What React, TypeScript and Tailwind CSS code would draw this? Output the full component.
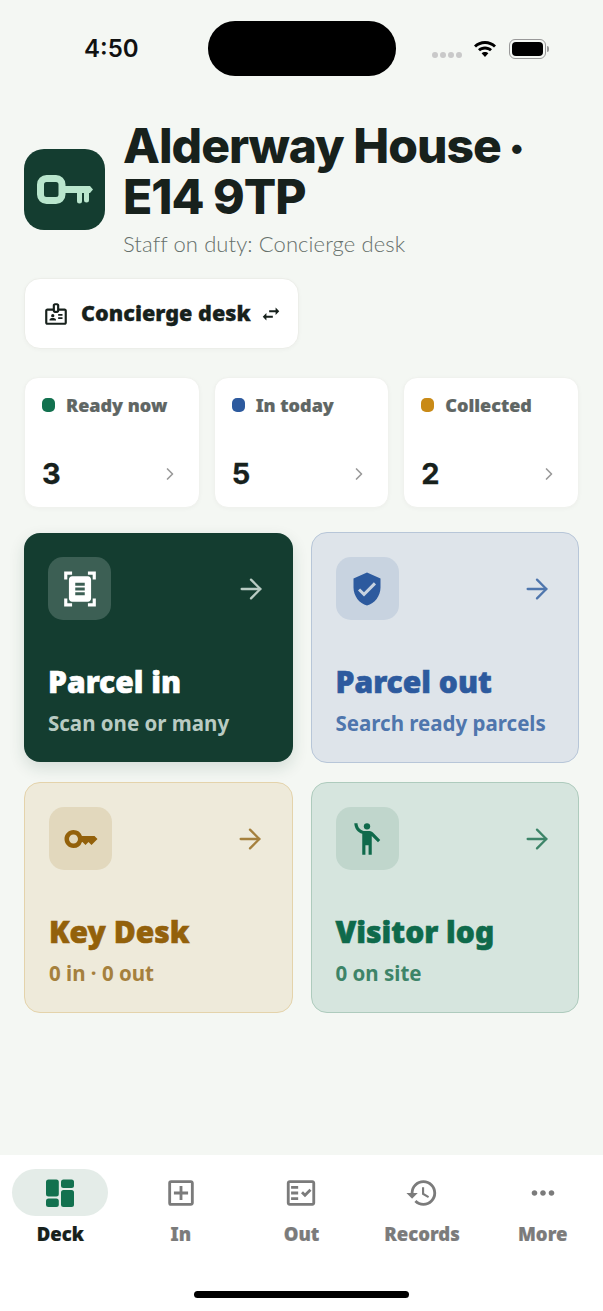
import { ArrowRight, ChevronRight } from "lucide-react";
import {
  MdDocumentScanner,
  MdEmojiPeople,
  MdHistory,
  MdKey,
  MdMoreHoriz,
  MdOutlineAddBox,
  MdOutlineBadge,
  MdOutlineFactCheck,
  MdSwapHoriz,
  MdVerifiedUser,
} from "react-icons/md";

const stats = [
  { label: "Ready now", value: "3", dot: "bg-[#12714f]" },
  { label: "In today", value: "5", dot: "bg-[#2d5a9e]" },
  { label: "Collected", value: "2", dot: "bg-[#c98a17]" },
];

const DeckIcon = ({ size, className }: { size: number; className?: string }) => (
  <svg width={size} height={size} viewBox="0 0 34 34" fill="currentColor" className={className}>
    <rect x="3" y="3.500" width="12.800" height="17" rx="2.500" />
    <rect x="3" y="22.500" width="12.800" height="8.500" rx="2.500" />
    <rect x="18" y="3.500" width="13" height="8.500" rx="2.500" />
    <rect x="18" y="14" width="13" height="17" rx="2.500" />
  </svg>
);

const tabs = [
  { label: "Deck", Icon: DeckIcon, active: true },
  { label: "In", Icon: MdOutlineAddBox, active: false },
  { label: "Out", Icon: MdOutlineFactCheck, active: false },
  { label: "Records", Icon: MdHistory, active: false },
  { label: "More", Icon: MdMoreHoriz, active: false },
];

const HouseKey = () => (
  <svg width="56" height="30" viewBox="0 0 56 30" fill="none">
    <rect x="3.500" y="3.500" width="21.500" height="22" rx="6" stroke="#b9e6cd" strokeWidth="7" />
    <path d="M28 11h25l3 3.500-3 3.500h-1v7a2.500 2.500 0 0 1-5 0v-7h-2v8a2.500 2.500 0 0 1-5 0v-8H28z" fill="#b9e6cd" />
  </svg>
);

const StatusBar = () => (
  <div className="relative h-[120px] shrink-0">
    <span className="absolute left-[84px] top-[33px] text-[24px] leading-[32px] font-semibold text-[#111] font-['Inter',sans-serif]">
      4:50
    </span>
    <div className="absolute left-[208px] top-[21px] h-[55px] w-[188px] rounded-[27px] bg-black" />
    <div className="absolute left-[432px] top-[52px] flex gap-[2px]">
      <span className="h-[6px] w-[6px] rounded-full bg-[#c9c9c9]" />
      <span className="h-[6px] w-[6px] rounded-full bg-[#c9c9c9]" />
      <span className="h-[6px] w-[6px] rounded-full bg-[#c9c9c9]" />
      <span className="h-[6px] w-[6px] rounded-full bg-[#c9c9c9]" />
    </div>
    <svg className="absolute left-[473px] top-[37px]" width="24" height="22" viewBox="0 0 24 20" fill="#000">
      <path d="M12 3C7.700 3 3.900 4.700 1 7.400l2 2.100C5.400 7.300 8.500 6 12 6s6.600 1.300 9 3.500l2-2.100C20.100 4.700 16.300 3 12 3z" />
      <path d="M12 8.500c-2.700 0-5.100 1-7 2.700l2 2.100c1.300-1.200 3.100-1.900 5-1.900s3.700.700 5 1.900l2-2.100c-1.900-1.700-4.300-2.700-7-2.700z" />
      <path d="M12 14c-1.300 0-2.500.500-3.400 1.300L12 19l3.400-3.700C14.500 14.500 13.300 14 12 14z" />
    </svg>
    <div className="absolute left-[509px] top-[39px] flex h-[20px] w-[37px] items-center justify-center rounded-[6px] border border-[#999]">
      <div className="h-[14px] w-[31px] rounded-[4px] bg-black" />
    </div>
    <div className="absolute left-[547px] top-[46px] h-[6px] w-[2px] rounded-r-full bg-[#999]" />
  </div>
);

type ActionProps = {
  title: string;
  sub: string;
  icon: React.ReactNode;
  card: string;
  tile: string;
  titleColor: string;
  subColor: string;
  arrowColor: string;
};

const ActionCard = ({ title, sub, icon, card, tile, titleColor, subColor, arrowColor }: ActionProps) => (
  <div className={`flex flex-col rounded-[16px] pt-[24px] pl-[24px] ${card}`}>
    <div className="flex items-center justify-between">
      <div className={`flex h-[63px] w-[63px] items-center justify-center rounded-[15px] ${tile}`}>{icon}</div>
      <ArrowRight size={32} strokeWidth={1.75} className={arrowColor} />
    </div>
    <div className={`mt-[41px] text-[30px] leading-[42px] font-black [-webkit-text-stroke:0.6px] ${titleColor}`}>{title}</div>
    <div className={`mt-[6px] text-[20.500px] leading-[28px] font-bold ${subColor}`}>{sub}</div>
  </div>
);

export default function App() {
  return (
    <div className="flex h-[1311px] w-[603px] flex-col overflow-hidden bg-[#f4f7f3] font-['Noto_Sans',sans-serif]">
      <StatusBar />

      <main className="flex-1 px-[24px]">
        <div className="flex items-start gap-[18px]">
          <div className="mt-[29px] flex h-[81px] w-[81px] shrink-0 items-center justify-center rounded-[20px] bg-[#143d30]">
            <HouseKey />
          </div>
          <div>
            <h1 className="text-[48px] leading-[51px] font-extrabold tracking-[-1px] text-[#17211c] font-['Inter',sans-serif]">
              Alderway House <span className="align-[5px] text-[30px] leading-none">•</span>
              <br />
              E14 9TP
            </h1>
            <p className="mt-[8px] text-[22px] leading-[28px] tracking-[0.1px] font-light text-[#66706b] font-['Lato',sans-serif]">
              Staff on duty: Concierge desk
            </p>
          </div>
        </div>

        <div className="mt-[20px] flex h-[71px] w-[275px] items-center rounded-[16px] border border-[#eceee9] bg-white pl-[18px] shadow-[0_1px_4px_rgba(0,0,0,0.03)]">
          <MdOutlineBadge size={26} className="text-[#17211c]" />
          <span className="ml-[12px] text-[21.600px] font-black text-[#17211c] [-webkit-text-stroke:0.3px]">Concierge desk</span>
          <MdSwapHoriz size={22} className="ml-[9px] text-[#17211c]" />
        </div>

        <div className="mt-[28px] grid grid-cols-3 gap-[14px]">
          {stats.map((s) => (
            <div
              key={s.label}
              className="h-[131px] rounded-[14px] border border-[#f0f2ee] bg-white pl-[17px] pr-[19px] pt-[16px] shadow-[0_1px_4px_rgba(0,0,0,0.03)]"
            >
              <div className="flex items-center gap-[11px]">
                <span className={`h-[14px] w-[13px] rounded-[5px] ${s.dot}`} />
                <span className="text-[18px] leading-[22px] font-black text-[#5f6664] [-webkit-text-stroke:0.2px]">{s.label}</span>
              </div>
              <div className="mt-[38px] flex items-center justify-between">
                <span className="text-[29px] leading-[40px] font-bold text-[#17211c] font-['Inter',sans-serif] [-webkit-text-stroke:0.3px]">
                  {s.value}
                </span>
                <ChevronRight size={20} className="text-[#999]" />
              </div>
            </div>
          ))}
        </div>

        <div className="mt-[25px] grid grid-cols-2 gap-x-[18px] gap-y-[19px]">
          <ActionCard
            title="Parcel in"
            sub="Scan one or many"
            icon={<MdDocumentScanner size={38} className="text-white" />}
            card="h-[229px] pr-[26px] bg-[#143d30] shadow-[0_6px_16px_rgba(20,61,48,0.14)]"
            tile="bg-[#3c5f54]"
            titleColor="text-white"
            subColor="text-[#b9cbc3]"
            arrowColor="text-[#b9cbc3]"
          />
          <ActionCard
            title="Parcel out"
            sub="Search ready parcels"
            icon={<MdVerifiedUser size={36} className="text-[#2d5a9e]" />}
            card="h-[231px] -mt-[1px] pr-[25px] border border-[#b7c6d8] bg-[#dee4ea]"
            tile="bg-[#c8d3e0]"
            titleColor="text-[#2d5a9e]"
            subColor="text-[#4f76ad]"
            arrowColor="text-[#4f76ad]"
          />
          <ActionCard
            title="Key Desk"
            sub="0 in · 0 out"
            icon={<MdKey size={36} className="text-[#93610b]" />}
            card="h-[231px] pr-[26px] border border-[#e4d3ab] bg-[#eeeada]"
            tile="bg-[#e2d8bd]"
            titleColor="text-[#93610b]"
            subColor="text-[#a5803d]"
            arrowColor="text-[#a5803d]"
          />
          <ActionCard
            title="Visitor log"
            sub="0 on site"
            icon={<MdEmojiPeople size={38} className="text-[#0f6a4b]" />}
            card="h-[231px] pr-[25px] border border-[#aecbbd] bg-[#d6e5de]"
            tile="bg-[#c0d6cc]"
            titleColor="text-[#0f6a4b]"
            subColor="text-[#3d8468]"
            arrowColor="text-[#3d8468]"
          />
        </div>
      </main>

      <nav className="relative h-[156px] shrink-0 bg-white">
        <div className="grid grid-cols-5 pt-[14px]">
          {tabs.map(({ label, Icon, active }) => (
            <div key={label} className="flex flex-col items-center">
              <div className={`flex h-[47px] w-[96px] items-center justify-center rounded-full ${active ? "bg-[#e4ece8]" : ""}`}>
                <Icon size={34} className={active ? "text-[#12714f]" : "text-[#7b7b7b]"} />
              </div>
              <span className={`mt-[6px] text-[18.500px] leading-[24px] font-black [-webkit-text-stroke:0.2px] ${active ? "text-[#17211c]" : "text-[#7b7b7b]"}`}>
                {label}
              </span>
            </div>
          ))}
        </div>
        <div className="absolute bottom-[13px] left-[194px] h-[7px] w-[215px] rounded-full bg-black" />
      </nav>
    </div>
  );
}
